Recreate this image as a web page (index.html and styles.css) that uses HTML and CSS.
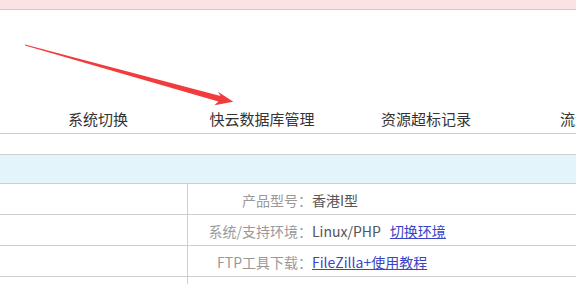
FILE: index.html
```html
<!DOCTYPE html>
<html>

<head>
    <title>快云 - 产品管理</title>
    <link rel="stylesheet" href="styles.css">
</head>

<body>
    <div class="notice-bar"></div>

    <div class="header"></div>

    <!-- Tabs -->
    <div class="tabs">
        <a class="tab">系统切换</a>
        <a class="tab">快云数据库管理</a>
        <a class="tab">资源超标记录</a>
        <a class="tab">流量统计</a>
    </div>

    <div class="spacer"></div>
    <div class="section-title"></div>

    <!-- Product info -->
    <div class="info-row">
        <div class="info-side"></div>
        <div class="info-main">
            <span class="info-label">产品型号：</span>
            <span class="info-value">香港I型</span>
        </div>
    </div>
    <div class="info-row">
        <div class="info-side"></div>
        <div class="info-main">
            <span class="info-label">系统/支持环境：</span>
            <span class="info-value">Linux/PHP<a class="info-link switch-link" href="#">切换环境</a></span>
        </div>
    </div>
    <div class="info-row">
        <div class="info-side"></div>
        <div class="info-main">
            <span class="info-label">FTP工具下载：</span>
            <span class="info-value"><a class="info-link" href="#">FileZilla+使用教程</a></span>
        </div>
    </div>
    <div class="info-row">
        <div class="info-side"></div>
        <div class="info-main"></div>
    </div>

    <!-- Annotation arrow -->
    <svg class="arrow" width="576" height="284" viewBox="0 0 576 284">
        <polygon points="25,44.6 220.5,96 218,91.7 233.3,101.8 214.4,105.3 218.4,101.4 25,45.6" fill="#f23c3c"/>
    </svg>
</body>

</html>
```

FILE: styles.css
```css
/* page styles */
body {
    margin: 0;
    font-family: "Noto Sans CJK SC", "Liberation Sans", sans-serif;
    color: #333;
    background: #fff;
    overflow: hidden;
}

.notice-bar {
    height: 9px;
    background-color: #fbe3e4;
    border-bottom: 1px solid #f2babd;
}

.header {
    height: 94px;
}

.tabs {
    display: flex;
    padding-left: 16px;
    height: 29px;
    border-bottom: 1px solid #cfcfcf;
    white-space: nowrap;
}

.tab {
    flex: 0 0 164px;
    text-align: center;
    font-size: 15px;
    line-height: 29px;
    color: #333;
}

.spacer {
    height: 20px;
}

.section-title {
    height: 28px;
    background-color: #e3f4fb;
    border-top: 1px solid #cfcfcf;
    border-bottom: 1px solid #cfcfcf;
}

.info-row {
    display: flex;
    height: 30px;
    border-bottom: 1px solid #cfcfcf;
    font-size: 14px;
}

.info-side {
    width: 187px;
}

.info-main {
    flex: 1;
    display: flex;
    align-items: center;
    padding-top: 1px;
    border-left: 1px solid #cfcfcf;
}

.info-label {
    width: 124px;
    text-align: right;
    color: #999;
}

.info-value {
    color: #555;
    white-space: nowrap;
}

.info-link {
    color: #3a44c6;
}

.switch-link {
    margin-left: 9px;
}

.arrow {
    position: absolute;
    left: 0;
    top: 0;
}
```
